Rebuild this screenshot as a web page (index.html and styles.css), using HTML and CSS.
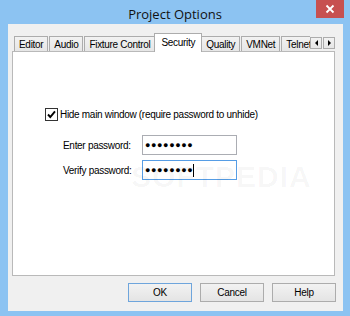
FILE: index.html
```html
<!DOCTYPE html>
<html>
<head>
<meta charset="utf-8">
<link rel="stylesheet" href="styles.css">
</head>
<body>
<div class="window">
  <div class="titlebar">
    <span class="title">Project Options</span>
    <div class="close">
      <svg width="10" height="10" viewBox="0 0 10 10"><path d="M1.5 1.5 L8.5 8.5 M8.5 1.5 L1.5 8.5" stroke="#fff" stroke-width="1.8" fill="none"/></svg>
    </div>
  </div>
  <div class="client">
    <div class="tabstrip">
      <div class="tabs">
        <div class="tab">Editor</div>
        <div class="tab">Audio</div>
        <div class="tab">Fixture Control</div>
        <div class="tab selected">Security</div>
        <div class="tab">Quality</div>
        <div class="tab">VMNet</div>
        <div class="tab">Telnet</div>
      </div>
      <div class="scroll">
        <div class="arrow"><span class="tri-left"></span></div>
        <div class="arrow"><span class="tri-right"></span></div>
      </div>
    </div>
    <div class="panel">
      <div class="check-row">
        <span class="checkbox">
          <svg width="13" height="13" viewBox="0 0 13 13"><rect x="0.5" y="0.5" width="12" height="12" fill="#fff" stroke="#333"/><path d="M3 6.5 L5.3 9 L10 3.3" stroke="#000" stroke-width="1.9" fill="none"/></svg>
        </span>
        <span>Hide main window (require password to unhide)</span>
      </div>
      <div class="form">
        <div class="field">
          <span class="label">Enter password:</span>
          <div class="input"><span class="dots">●●●●●●●●</span></div>
        </div>
        <div class="field">
          <span class="label">Verify password:</span>
          <div class="input focused"><span class="dots">●●●●●●●●</span><span class="caret"></span></div>
        </div>
      </div>
      <div class="watermark">SOFTPEDIA</div>
    </div>
    <div class="buttons">
      <button class="btn default">OK</button>
      <button class="btn">Cancel</button>
      <button class="btn">Help</button>
    </div>
  </div>
</div>
</body>
</html>
```
FILE: styles.css
```css
html, body {
  margin: 0;
  padding: 0;
}
body {
  width: 350px;
  height: 316px;
  overflow: hidden;
  background: #8cc3f2;
  font-family: "Liberation Sans", Arial, sans-serif;
  font-size: 10px;
  letter-spacing: -0.3px;
  color: #000;
}
.window {
  display: flex;
  flex-direction: column;
  height: 316px;
}
.titlebar {
  height: 24px;
  position: relative;
  display: flex;
  justify-content: center;
  align-items: center;
}
.title {
  font-family: "Open Sans", "Noto Sans", sans-serif;
  font-size: 13px;
  letter-spacing: 0;
  color: #111;
  padding-top: 4px;
}
.close {
  position: absolute;
  top: 0;
  right: 6px;
  width: 28px;
  height: 18px;
  background: #c75050;
  display: flex;
  align-items: center;
  justify-content: center;
}
.client {
  margin: 0 7px 0 8px;
  background: #f0f0f0;
  padding: 9px 8px 9px 4px;
  display: flex;
  flex-direction: column;
}
.tabstrip {
  display: flex;
  height: 19px;
  margin-bottom: -1px;
  position: relative;
  z-index: 1;
}
.tabs {
  flex: 1;
  min-width: 0;
  display: flex;
  align-items: flex-end;
  overflow: hidden;
  padding-left: 2px;
}
.tab {
  flex: none;
  height: 14px;
  margin: 0 1px 1px 0;
  padding: 0 4px;
  border: 1px solid #acacac;
  border-bottom: none;
  background: linear-gradient(#f2f2f2, #e6e6e6);
  display: flex;
  align-items: center;
  white-space: nowrap;
}
.tab.selected {
  height: 18px;
  margin: 0 -1px 0 -2px;
  padding: 0 6px 1px;
  box-sizing: border-box;
  height: 19px;
  background: #fff;
  position: relative;
  z-index: 2;
}
.scroll {
  flex: none;
  display: flex;
  gap: 1px;
  align-items: flex-start;
  padding-top: 4px;
}
.arrow {
  width: 12px;
  height: 12px;
  box-sizing: border-box;
  border: 1px solid #acacac;
  background: linear-gradient(#f2f2f2, #e6e6e6);
  display: flex;
  align-items: center;
  justify-content: center;
}
.tri-left {
  width: 0;
  height: 0;
  border-top: 3px solid transparent;
  border-bottom: 3px solid transparent;
  border-right: 3px solid #000;
}
.tri-right {
  width: 0;
  height: 0;
  border-top: 3px solid transparent;
  border-bottom: 3px solid transparent;
  border-left: 3px solid #000;
}
.panel {
  height: 225px;
  box-sizing: border-box;
  border: 1px solid #b9b9b9;
  background: #fff;
  position: relative;
  padding: 56px 0 0 32px;
}
.check-row {
  display: flex;
  align-items: center;
  gap: 2px;
  height: 13px;
}
.checkbox {
  display: flex;
  width: 13px;
  height: 13px;
}
.form {
  margin-top: 14px;
  margin-left: 18px;
  display: flex;
  flex-direction: column;
  gap: 5px;
}
.field {
  display: flex;
  align-items: center;
  height: 20px;
}
.label {
  width: 79px;
  flex: none;
}
.input {
  width: 95px;
  height: 20px;
  box-sizing: border-box;
  border: 1px solid #abadb3;
  background: #fff;
  display: flex;
  align-items: center;
  padding-left: 2px;
}
.input.focused {
  border-color: #569de5;
}
.dots {
  font-family: "Liberation Sans", "DejaVu Sans", sans-serif;
  font-size: 9px;
  letter-spacing: 0.6px;
  line-height: 1;
}
.caret {
  width: 1px;
  height: 13px;
  background: #000;
}
.watermark {
  position: absolute;
  left: 118px;
  top: 108px;
  font-family: "Liberation Sans", Arial, sans-serif;
  font-weight: bold;
  font-size: 30px;
  letter-spacing: 1px;
  color: rgba(0, 0, 0, 0.035);
  pointer-events: none;
}
.buttons {
  display: flex;
  justify-content: flex-end;
  gap: 8px;
  margin-top: 7px;
  margin-right: -1px;
}
.btn {
  width: 64px;
  height: 19px;
  box-sizing: border-box;
  padding: 0;
  border: 1px solid #acacac;
  background: linear-gradient(#f2f2f2, #e4e4e4);
  font: inherit;
  letter-spacing: inherit;
  color: #000;
}
.btn.default {
  border-color: #6ea5dc;
}
```
